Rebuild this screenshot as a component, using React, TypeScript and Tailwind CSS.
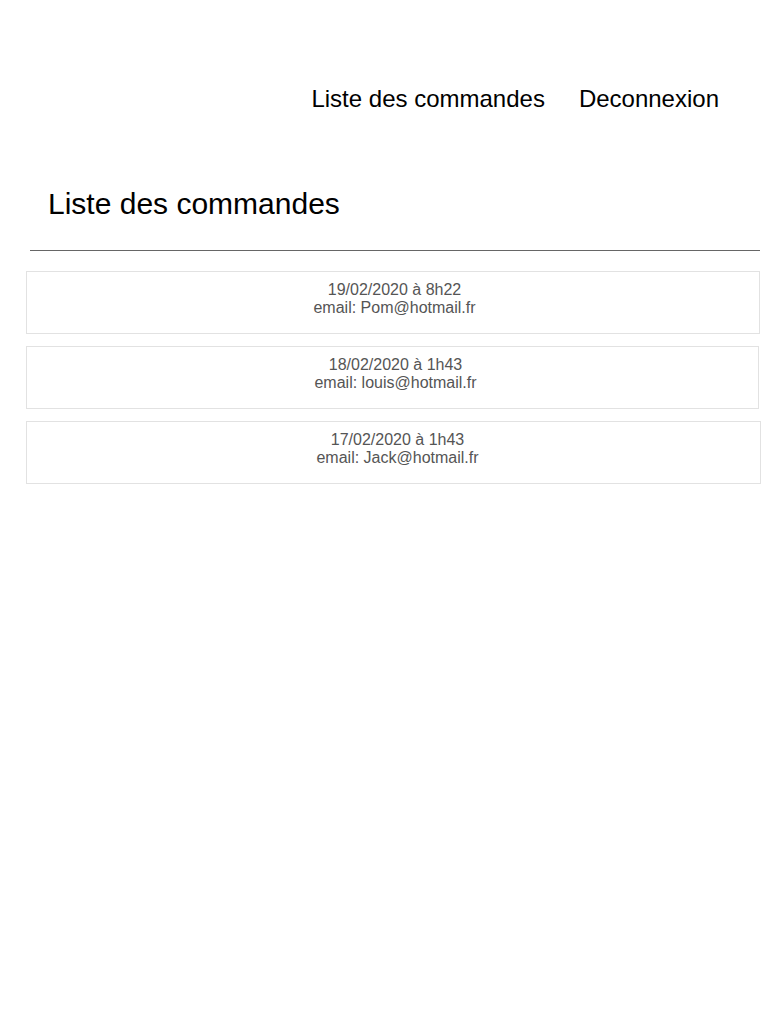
import React from "react";

const orders = [
  { date: "19/02/2020 à 8h22", email: "Pom@hotmail.fr", cls: "w-[734px] pl-[3px]" },
  { date: "18/02/2020 à 1h43", email: "louis@hotmail.fr", cls: "w-[733px] pl-[6px]" },
  { date: "17/02/2020 à 1h43", email: "Jack@hotmail.fr", cls: "w-[735px] pl-[8px]" },
];

export default function App() {
  return (
    <div className="min-h-[1024px] bg-white font-['Liberation_Sans',Arial,sans-serif]">
      <nav className="flex justify-end gap-[34px] pr-[49px] pt-[85px] text-[24px] leading-[28px] text-black">
        <a>Liste des commandes</a>
        <a>Deconnexion</a>
      </nav>
      <h1 className="mt-[73px] ml-[48px] text-[30px] leading-[36px] text-black">Liste des commandes</h1>
      <div className="mt-[28px] ml-[30px] w-[730px] h-px bg-[#666]" />
      <div className="mt-[20px] ml-[26px] flex flex-col items-start gap-[12px]">
        {orders.map((o) => (
          <div
            key={o.date}
            className={`${o.cls} h-[63px] border border-[#e2e2e2] pt-[9px] text-center text-[16px] leading-[18px] text-[#555]`}
          >
            <div>{o.date}</div>
            <div>email: {o.email}</div>
          </div>
        ))}
      </div>
    </div>
  );
}
